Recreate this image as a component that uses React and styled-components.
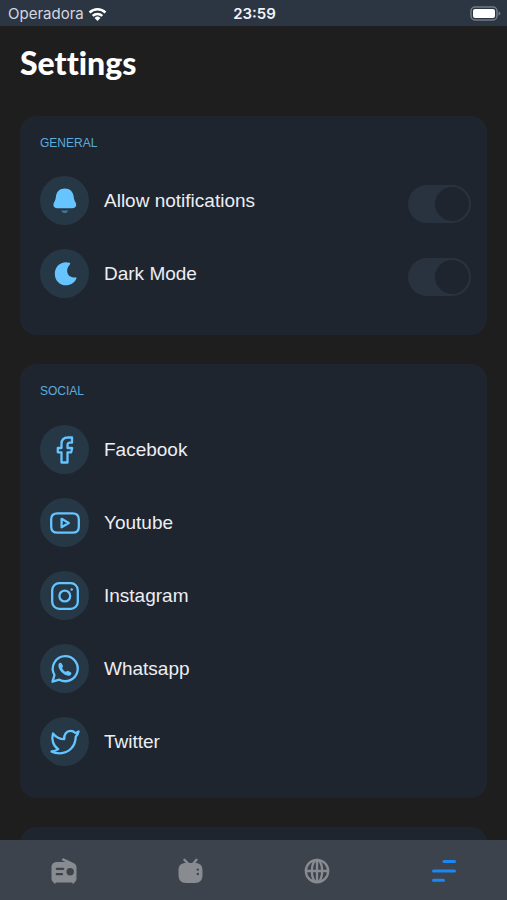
import React, { useState } from "react";
import styled, { createGlobalStyle } from "styled-components";

const GlobalStyle = createGlobalStyle`
  *, *::before, *::after { box-sizing: border-box; }
  body { margin: 0; background: #1e1e1f; }
`;

const Screen = styled.div`
  display: flex;
  flex-direction: column;
  height: 100dvh;
  overflow: hidden;
  background: #1e1e1f;
  color: #eceef3;
  font-family: "Liberation Sans", Arial, sans-serif;
`;

const StatusBar = styled.header`
  flex: none;
  display: grid;
  grid-template-columns: 1fr auto 1fr;
  align-items: center;
  height: 26px;
  padding: 2px 6px 0 8px;
  background: #2c3542;
  font: 400 15px/20px Inter, sans-serif;
  color: #d3d8e0;
`;

const Carrier = styled.div`
  display: flex;
  align-items: center;
  gap: 4px;
`;

const Clock = styled.time`
  font-weight: 600;
  color: #f2f4f7;
`;

const BatterySlot = styled.div`
  display: flex;
  justify-content: flex-end;
  padding-bottom: 2px;
`;

const Content = styled.main`
  flex: 1;
  min-height: 0;
  overflow-y: auto;
  scrollbar-width: none;
  padding: 12px 20px 30px;
`;

const Title = styled.h1`
  margin: 0 0 28px;
  font: 900 32px/50px Lato, sans-serif;
  font-variant-ligatures: none;
  color: #ffffff;
`;

const Card = styled.section`
  min-height: 120px;
  margin-bottom: 29px;
  padding: 19px 16px 32px 20px;
  border-radius: 16px;
  background: #1f252f;
`;

const CardTitle = styled.h2`
  margin: 0 0 25px;
  font-size: 12px;
  font-weight: 400;
  line-height: 16px;
  color: #5cacdc;
`;

const List = styled.ul`
  display: flex;
  flex-direction: column;
  gap: 24px;
  margin: 0;
  padding: ${(p) => (p.$toggles ? "0 0 5px" : "1px 0 0")};
  list-style: none;
`;

const rowLayout = `
  display: flex;
  align-items: center;
  gap: 15px;
  font-size: 19px;
  line-height: 24px;
  color: inherit;
  text-decoration: none;
`;

const SettingRow = styled.label`
  ${rowLayout}
`;

const LinkRow = styled.a`
  ${rowLayout}
`;

const IconDisc = styled.span`
  display: grid;
  place-items: center;
  flex: none;
  width: 49px;
  height: 49px;
  border-radius: 50%;
  background: #263746;
  color: #66c4ff;
`;

const Switch = styled.input`
  appearance: none;
  display: flex;
  justify-content: ${(p) => (p.checked ? "flex-end" : "flex-start")};
  align-self: flex-end;
  width: 63px;
  height: 38px;
  margin: 0 0 2px auto;
  padding: 2px;
  border-radius: 19px;
  background: #29333f;
  cursor: pointer;

  &::before {
    content: "";
    width: 34px;
    height: 34px;
    border-radius: 50%;
    background: #1f252f;
  }
`;

const TabBar = styled.nav`
  flex: none;
  display: grid;
  grid-template-columns: repeat(4, 1fr);
  height: 60px;
  background: #3d434d;
`;

const Tab = styled.button`
  display: grid;
  place-items: center;
  padding: 2px 0 0;
  border: 0;
  background: none;
  color: ${(p) => (p.$active ? "#1a87f3" : "#888b90")};
  cursor: pointer;
`;

const stroke = {
  fill: "none",
  stroke: "currentColor",
  strokeWidth: 2.3,
  strokeLinecap: "round",
  strokeLinejoin: "round",
};

const WifiIcon = () => (
  <svg width="19" height="15" viewBox="0 0 20 15" fill="none" stroke="#fff" strokeWidth="2.6" aria-hidden="true">
    <path d="M1.6 5.4C6.4 .8 13.6 .8 18.4 5.4M4.9 9C7.8 6.3 12.2 6.3 15.1 9" />
    <path d="M10 14.4 6.9 11.2a4.5 4.5 0 0 1 6.2 0Z" fill="#fff" stroke="none" />
  </svg>
);

const BatteryIcon = () => (
  <svg width="31" height="15" viewBox="0 0 31 15" aria-label="Battery full">
    <rect x="1" y="1" width="26" height="13" rx="4" fill="none" stroke="#747b85" strokeWidth="1.5" />
    <rect x="3" y="3" width="22" height="9" rx="2" fill="#fff" />
    <path d="M28.5 5.5c1.2.4 1.8 1.1 1.8 2s-.6 1.6-1.8 2Z" fill="#747b85" />
  </svg>
);

const BellIcon = () => (
  <svg width="24" height="28" viewBox="0 0 24 28" fill="currentColor" aria-hidden="true">
    <path d="M11.8 1.500C6.600 1.500 3.300 5 2.900 9.600c-.2 2.200-.5 3.600-1.500 5.200-2.100 3.300-.8 6.500 3.100 6.500h14.600c3.900 0 5.200-3.200 3.100-6.500-1-1.600-1.300-3-1.500-5.200-.4-4.600-3.700-8.100-8.900-8.100Z" />
    <path d="M8.300 23.500h7c-.8 1.900-2 2.500-3.500 2.500s-2.700-.6-3.500-2.500Z" opacity=".45" />
  </svg>
);

const MoonIcon = () => (
  <svg width="24" height="26" viewBox="0 0 24 26" fill="currentColor" aria-hidden="true">
    <path d="M16.500 1.700C8.500-.6 1.800 5 1.800 12.700c0 6.800 4.800 11.600 11.200 11.600 4.800 0 8.500-2.500 10.300-6.500.5-1.100-.1-1.600-1.100-1.400C14.700 17.400 11.500 9.500 16.700 3.700c.8-.9.800-1.700-.2-2Z" />
  </svg>
);

const FacebookIcon = () => (
  <svg width="32" height="32" viewBox="0 0 32 32" {...stroke} aria-hidden="true">
    <path d="M23 3.500h-4c-4 0-6.500 2.300-6.500 6.500v4H8.800v4.300h3.700V28.500h6V18.300h3.700l1-4.300h-4.700v-2.800c0-1.700.8-2.500 2.500-2.500h2Z" />
  </svg>
);

const YoutubeIcon = () => (
  <svg width="32" height="32" viewBox="0 0 32 32" {...stroke} aria-hidden="true">
    <path d="M8.500 6.300h15c4 0 6.300 2 6.300 6v7.400c0 4-2.300 6-6.300 6h-15c-4 0-6.300-2-6.300-6v-7.400c0-4 2.300-6 6.300-6Z" />
    <path d="m12.600 11.800 7.200 4.200-7.200 4.200Z" />
  </svg>
);

const InstagramIcon = () => (
  <svg width="32" height="32" viewBox="0 0 32 32" {...stroke} aria-hidden="true">
    <rect x="3.200" y="3.200" width="25.600" height="25.600" rx="7" />
    <circle cx="15.800" cy="16" r="5.400" />
    <circle cx="22.700" cy="9.500" r="1.200" fill="currentColor" stroke="none" />
  </svg>
);

const WhatsappIcon = () => (
  <svg width="32" height="32" viewBox="0 0 32 32" {...stroke} aria-hidden="true">
    <path d="M16.300 3.200a12.500 12.500 0 1 1-6 23.500L3.500 28.700l2-6.700A12.500 12.500 0 0 1 16.300 3.200Z" />
    <path
      d="M9.700 10.800c.7-1.300 2.300-1.600 3-.4l1.200 2.300c.5 1-.9 1.700-.7 2.500.6 1.600 1.800 2.800 3.500 3.500.8.3 1.500-1.200 2.500-.8l2.500 1.300c1.200.7.8 2.200-.4 3-4.700 2.800-13.800-6.300-11.600-11.400Z"
      fill="currentColor"
      stroke="none"
    />
  </svg>
);

const TwitterIcon = () => (
  <svg width="32" height="32" viewBox="0 0 32 32" {...stroke} aria-hidden="true">
    <path d="M4 7.500c3 3.800 6.800 5.700 11.200 5.700-.3-5 2.300-8.300 6.300-8.300 2.200 0 3.600.8 4.600 1.900.5.500 1.200.2 1.900-.3l1.600-1.100c-.3 2.200-1.300 3.800-2.800 5.200-.4 9.700-6.600 16.700-16 16.700-3.300 0-6-.4-8.300-1.800 2.700-.1 4.900-.8 6.800-2.300C3.800 19.800 2.400 13 4 7.500Z" />
  </svg>
);

const RadioIcon = () => (
  <svg width="28" height="28" viewBox="-1 0 28 28" aria-hidden="true">
    <path
      fill="currentColor"
      fillRule="evenodd"
      d="M12 2.2c.4-.8 1.1-1 1.9-.7l9 4.200C25 6.400 26.500 8 26.500 10.500v11c0 1.800-.7 3-2 3.600v.7c0 1-2.500 1-2.500 0v-.3H6v.3c0 1-2.500 1-2.500 0v-.7c-1.300-.6-2-1.800-2-3.600v-11C1.500 6.500 4 5 7.500 5h8L12.800 3.800c-.8-.3-1.100-.8-.8-1.600ZM6.800 10.700a1.100 1.100 0 0 0 0 2.300h6.400a1.100 1.100 0 0 0 0-2.300Zm0 5.300a1.100 1.100 0 0 0 0 2.300H12a1.100 1.100 0 0 0 0-2.300Zm13.400-5a3.700 3.700 0 1 0 0 7.400 3.700 3.700 0 0 0 0-7.400Z"
    />
  </svg>
);

const TvIcon = () => (
  <svg width="28" height="28" viewBox="-1 0 28 28" aria-hidden="true">
    <path d="m7.500 2.800 4.500 4.700M19.500 2.800 15.500 7.500" stroke="currentColor" strokeWidth="2.400" strokeLinecap="round" />
    <path
      fill="currentColor"
      fillRule="evenodd"
      d="M9 6h9c4.800 0 7.500 2.500 7.500 7v5.500c0 4.500-2.700 7.500-7.500 7.500H9c-4.800 0-7.500-3-7.500-7.500V13c0-4.500 2.700-7 7.500-7Zm11.800 5.400a1.200 1.200 0 1 0 0 2.400 1.200 1.200 0 0 0 0-2.400Zm0 4.400a1.200 1.200 0 1 0 0 2.400 1.200 1.200 0 0 0 0-2.400Z"
    />
  </svg>
);

const GlobeIcon = () => (
  <svg width="28" height="28" viewBox="0 0 28 28" fill="none" stroke="currentColor" strokeWidth="2.300" aria-hidden="true">
    <circle cx="14" cy="14" r="11.200" />
    <ellipse cx="14" cy="14" rx="5.200" ry="11.200" />
    <path d="M14 2.800v22.400M2.800 14h22.400" />
  </svg>
);

const MenuIcon = () => (
  <svg width="28" height="28" viewBox="0 0 28 28" stroke="currentColor" strokeWidth="3" strokeLinecap="round" aria-hidden="true">
    <path d="M14 4.500h10.500M3.500 14h21M3.500 23.300h10" />
  </svg>
);

const settings = [
  { name: "Allow notifications", icon: <BellIcon /> },
  { name: "Dark Mode", icon: <MoonIcon /> },
];

const socials = [
  { name: "Facebook", icon: <FacebookIcon /> },
  { name: "Youtube", icon: <YoutubeIcon /> },
  { name: "Instagram", icon: <InstagramIcon /> },
  { name: "Whatsapp", icon: <WhatsappIcon /> },
  { name: "Twitter", icon: <TwitterIcon /> },
];

const tabs = [
  { name: "Radio", icon: <RadioIcon /> },
  { name: "TV", icon: <TvIcon /> },
  { name: "Web", icon: <GlobeIcon /> },
  { name: "Settings", icon: <MenuIcon /> },
];

function ToggleSetting({ name, icon }) {
  const [on, setOn] = useState(true);
  return (
    <SettingRow>
      <IconDisc>{icon}</IconDisc>
      {name}
      <Switch type="checkbox" role="switch" checked={on} onChange={(e) => setOn(e.target.checked)} />
    </SettingRow>
  );
}

export default function App() {
  return (
    <Screen>
      <GlobalStyle />
      <StatusBar>
        <Carrier>
          Operadora <WifiIcon />
        </Carrier>
        <Clock>23:59</Clock>
        <BatterySlot>
          <BatteryIcon />
        </BatterySlot>
      </StatusBar>
      <Content>
        <Title>Settings</Title>
        <Card>
          <CardTitle>GENERAL</CardTitle>
          <List $toggles>
            {settings.map((s) => (
              <li key={s.name}>
                <ToggleSetting {...s} />
              </li>
            ))}
          </List>
        </Card>
        <Card>
          <CardTitle>SOCIAL</CardTitle>
          <List>
            {socials.map((s) => (
              <li key={s.name}>
                <LinkRow href={`#${s.name.toLowerCase()}`}>
                  <IconDisc>{s.icon}</IconDisc>
                  {s.name}
                </LinkRow>
              </li>
            ))}
          </List>
        </Card>
        <Card />
      </Content>
      <TabBar>
        {tabs.map((t) => (
          <Tab key={t.name} type="button" aria-label={t.name} $active={t.name === "Settings"}>
            {t.icon}
          </Tab>
        ))}
      </TabBar>
    </Screen>
  );
}
